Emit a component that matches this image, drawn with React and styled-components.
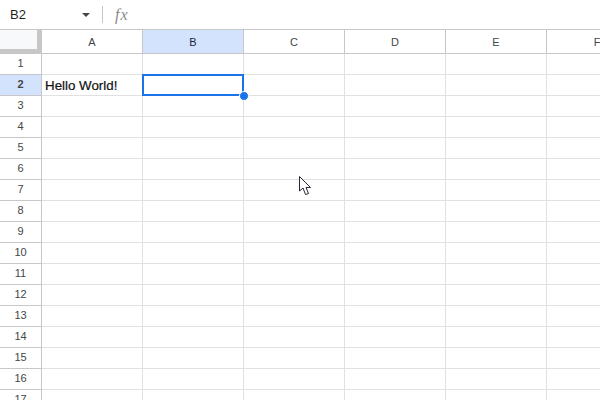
import React from "react";
import styled, { createGlobalStyle } from "styled-components";

const Global = createGlobalStyle`
html, body { margin: 0; padding: 0; background: #fff; overflow: hidden; }
body { font-family: "Liberation Sans", Arial, sans-serif; }
`
const Page = styled.div`
width: 600px;
height: 400px;
overflow: hidden;
position: relative;
`
const FormulaBar = styled.div`
height: 29px;
display: flex;
align-items: center;
border-bottom: 1px solid #c7c7c7;
background: #fff;
`
const NameBox = styled.div`
width: 92px;
padding-left: 10px;
box-sizing: border-box;
font-size: 13px;
color: #1f1f1f;
`
const Caret = styled.div`
width: 0;
height: 0;
border-left: 4px solid transparent;
border-right: 4px solid transparent;
border-top: 4px solid #444746;
margin-left: -10px;
margin-right: 12px;
`
const Divider = styled.div`
width: 1px;
height: 17px;
background: #c7c7c7;
margin-right: 10px;
`
const Sheet = styled.div`
display: grid;
grid-template-columns: 42px repeat(6, 101px);
grid-template-rows: 24px;
grid-auto-rows: 21px;
`
const Corner = styled.div`
box-sizing: border-box;
background: #f8f9fa;
border-right: 5px solid #c7c7c7;
border-bottom: 5px solid #c7c7c7;
`
const ColHead = styled.div`
box-sizing: border-box;
display: flex;
align-items: center;
justify-content: center;
font-size: 11px;
color: ${p => (p.$active ? "#1f1f3f" : "#444746")};
background: ${p => (p.$active ? "#d3e3fd" : "#fff")};
border-right: 1px solid #c7c7c7;
border-bottom: 1px solid #c7c7c7;
`
const RowHead = styled.div`
box-sizing: border-box;
display: flex;
align-items: center;
justify-content: center;
padding-bottom: 2px;
font-size: 11px;
color: #444746;
font-weight: ${p => (p.$active ? 700 : 400)};
background: ${p => (p.$active ? "#d3e3fd" : "#fff")};
border-right: 1px solid #c7c7c7;
border-bottom: 1px solid #c7c7c7;
`
const Cell = styled.div`
box-sizing: border-box;
border-right: 1px solid #e1e1e1;
border-bottom: 1px solid #e1e1e1;
padding-left: 3px;
font-size: 13.33px;
line-height: 21px;
color: #111;
-webkit-text-stroke: 0.2px #111;
white-space: nowrap;
`
const Selection = styled.div`
position: absolute;
left: 142px;
top: 74px;
width: 102px;
height: 22px;
box-sizing: border-box;
border: 2px solid #1a73e8;
`
const Handle = styled.div`
position: absolute;
right: -7px;
bottom: -7px;
width: 8px;
height: 8px;
border-radius: 50%;
background: #1a73e8;
border: 1px solid #fff;
`
const Pointer = styled.svg`
position: absolute;
left: 299px;
top: 176px;
`

const columns = ["A", "B", "C", "D", "E", "F"];
const rows = Array.from({ length: 17 }, (_, i) => i + 1);

export default function App() {
  return (
    <Page>
      <Global />
      <FormulaBar>
        <NameBox>B2</NameBox>
        <Caret />
        <Divider />
        <svg width="24" height="22" viewBox="0 0 24 22">
          <text x="2" y="16" fontFamily="Liberation Serif" fontStyle="italic" fontSize="16" letterSpacing="1" fill="#8a8a8a">fx</text>
        </svg>
      </FormulaBar>
      <Sheet>
        <Corner />
        {columns.map(c => (
          <ColHead key={c} $active={c === "B"}>{c}</ColHead>
        ))}
        {rows.map(r => (
          <React.Fragment key={r}>
            <RowHead $active={r === 2}>{r}</RowHead>
            {columns.map(c => (
              <Cell key={c}>{r === 2 && c === "A" ? "Hello World!" : ""}</Cell>
            ))}
          </React.Fragment>
        ))}
      </Sheet>
      <Selection><Handle /></Selection>
      <Pointer width="13" height="20" viewBox="0 0 13 20">
        <path d="M0.5 0.5 L0.5 15 L4 12 L6.5 18.5 L9.5 17.5 L7 11.5 L11.5 11.5 Z" fill="#fff" stroke="#2a2433" strokeWidth="1" />
      </Pointer>
    </Page>
  );
}
